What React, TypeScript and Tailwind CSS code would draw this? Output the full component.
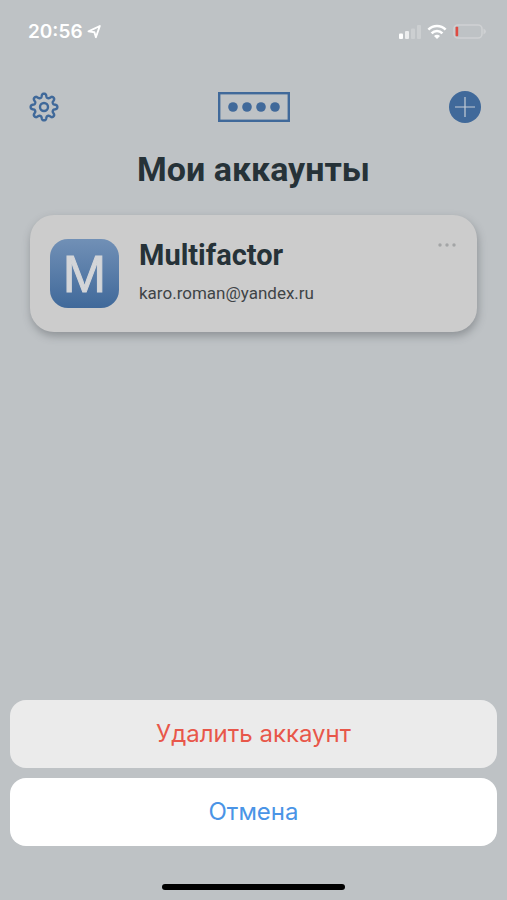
import React, { useState } from 'react';

interface Account {
  id: number;
  name: string;
  email: string;
}

const accounts: Account[] = [
  { id: 1, name: 'Multifactor', email: 'karo.roman@yandex.ru' },
];

// Outline of a cog with soft teeth, centred on 0,0
const gearPath = (teeth: number, radius: number, depth: number) => {
  const steps = 192;
  const points: string[] = [];
  for (let i = 0; i < steps; i++) {
    const angle = (i / steps) * Math.PI * 2;
    const r = radius + depth * Math.tanh(1.6 * Math.cos(teeth * angle));
    points.push(`${(r * Math.sin(angle)).toFixed(2)} ${(-r * Math.cos(angle)).toFixed(2)}`);
  }
  return `M${points.join('L')}Z`;
};

const StatusBar: React.FC = () => (
  <div className="flex h-16 items-center justify-between pl-7 pr-5 font-['Inter',sans-serif]">
    <div className="flex items-center gap-1 text-white">
      <span className="text-[19px] font-semibold leading-6">20:56</span>
      <svg width="16" height="16" viewBox="0 0 16 16" fill="none" stroke="currentColor" strokeWidth="1.9" strokeLinejoin="round">
        <path d="M1.5 7.4 12.8 2 8.9 13.2 7.4 8.2Z" />
      </svg>
    </div>
    <div className="flex items-center gap-1.5">
      <svg width="24" height="16" viewBox="0 0 24 16" fill="#fff">
        <rect x="2" y="9.5" width="4" height="5.5" rx="1" />
        <rect x="8" y="7" width="4" height="8" rx="1" opacity=".7" />
        <rect x="14" y="4.5" width="4" height="10.5" rx="1" opacity=".22" />
        <rect x="20" y="1" width="4" height="14" rx="1" opacity=".22" />
      </svg>
      <svg width="20" height="16" viewBox="0 0 20 16" fill="none" stroke="#fff" strokeWidth="2.6">
        <path d="M1.4 5.6A12.2 12.2 0 0 1 18.6 5.6" />
        <path d="M4.6 9.4A7.4 7.4 0 0 1 15.4 9.4" />
        <path d="M7 12A4.2 4.2 0 0 1 13 12L10 15Z" fill="#fff" stroke="none" />
      </svg>
      <svg width="34" height="16" viewBox="0 0 34 16">
        <rect x="1" y="1" width="28" height="13" rx="4" fill="none" stroke="#cfd1d3" strokeWidth="1.6" />
        <path d="M30.5 4.5Q33 6 33 7.5T30.5 10.5Z" fill="#cfd1d3" />
        <rect x="2.6" y="2.8" width="2.6" height="9.4" rx=".6" fill="#df4b42" />
      </svg>
    </div>
  </div>
);

const App: React.FC = () => {
  const [selected, setSelected] = useState<Account | null>(accounts[0]);

  return (
    <div className="flex min-h-screen flex-col bg-[#bec2c5] font-['Roboto',sans-serif] text-[#263238]">
      <StatusBar />

      {/* Toolbar */}
      <header className="grid grid-cols-3 items-center px-6 pt-[23px]">
        <button className="flex size-10 items-center justify-center text-[#40699a]" aria-label="Настройки">
          <svg width="32" height="32" viewBox="-16 -16 32 32" fill="none" stroke="currentColor" strokeWidth="2.4" strokeLinejoin="round">
            <path d={gearPath(8, 11.5, 2)} />
            <circle r="4" />
          </svg>
        </button>
        <svg className="justify-self-center text-[#40699a]" width="72" height="30" viewBox="0 0 72 30" fill="currentColor">
          <rect x="1.2" y="1.2" width="69.6" height="27.6" fill="none" stroke="currentColor" strokeWidth="2.4" />
          <circle cx="15" cy="15" r="4.8" />
          <circle cx="29" cy="15" r="4.8" />
          <circle cx="43" cy="15" r="4.8" />
          <circle cx="57" cy="15" r="4.8" />
        </svg>
        <button className="mr-0.5 flex size-8 items-center justify-center justify-self-end rounded-full bg-[#40699a] text-[#c5cdd6]" aria-label="Добавить">
          <svg width="20" height="20" viewBox="0 0 20 20" stroke="currentColor" strokeWidth="1.2">
            <path d="M10 0V20M0 10H20" />
          </svg>
        </button>
      </header>

      <main className="px-[30px]">
        <h1 className="mt-5 text-center text-[34px] font-bold leading-11">Мои аккаунты</h1>

        {accounts.map((account) => (
          <section key={account.id} className="mt-6 flex gap-5 rounded-3xl bg-[#cccccc] px-5 py-6 shadow-[1px_4px_8px_rgba(70,75,80,0.4)]">
            <div className="flex size-[69px] shrink-0 items-center justify-center rounded-[18px] bg-linear-to-b from-[#7190b6] to-[#40699a] font-['Liberation_Sans',sans-serif] text-[52px] leading-none text-[#d3d5d8] [-webkit-text-stroke:1px_#d3d5d8]">
              M
            </div>
            <div className="min-w-0 flex-1">
              <h2 className="text-[29px] font-bold leading-8">{account.name}</h2>
              <p className="mt-2.5 text-[17px] leading-6 text-[#3f4447]">{account.email}</p>
            </div>
            <button className="flex h-3 self-start text-[#a3a5a6]" aria-label="Действия" onClick={() => setSelected(account)}>
              <svg width="20" height="12" viewBox="0 0 20 12" fill="currentColor">
                <circle cx="3" cy="6" r="1.7" />
                <circle cx="10" cy="6" r="1.7" />
                <circle cx="17" cy="6" r="1.7" />
              </svg>
            </button>
          </section>
        ))}
      </main>

      {/* Action sheet */}
      {selected && (
        <div className="mt-auto flex flex-col gap-2.5 px-2.5 font-['Inter',sans-serif] text-2xl">
          <button className="h-[68px] rounded-2xl bg-[#ebebeb] text-[#e8574a]">Удалить аккаунт</button>
          <button className="h-[68px] rounded-2xl bg-white text-[#4a94e6]" onClick={() => setSelected(null)}>
            Отмена
          </button>
        </div>
      )}

      <div className="mx-auto mb-2.5 mt-[38px] h-1.5 w-[36%] rounded-full bg-black" />
    </div>
  );
};

export default App;
